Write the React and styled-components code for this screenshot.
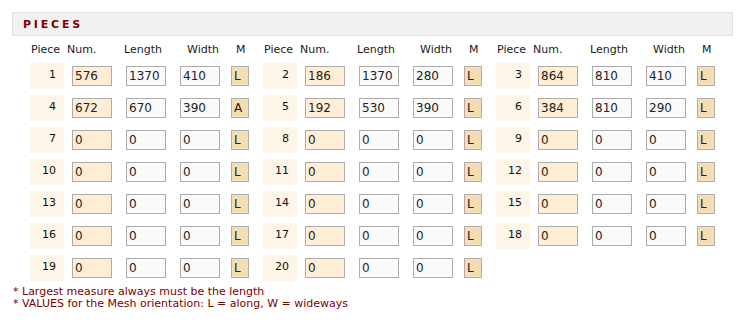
import React from "react";
import styled, { createGlobalStyle } from "styled-components";

const GlobalStyle = createGlobalStyle`
  body {
    margin: 0;
    background: #fff;
    font-family: Verdana, "DejaVu Sans", sans-serif;
  }
`;

const Page = styled.div`
  padding: 12px 13px 0 12px;
`;

const TitleBar = styled.div`
  height: 24px;
  box-sizing: border-box;
  border: 1px solid #e4e0e0;
  background: #f2f1f1;
  padding-left: 10px;
  display: flex;
  align-items: center;
`;

const Title = styled.h2`
  margin: 0;
  font-size: 11px;
  font-weight: bold;
  letter-spacing: 2.8px;
  color: #800000;
`;

const Grid = styled.div`
  display: grid;
  grid-template-columns: repeat(3, 48px 48px 54px 54px 29px);
  grid-auto-rows: 26px;
  grid-template-rows: 15px;
  row-gap: 6px;
  margin: 6px 0 0 4px;
`;

const Label = styled.div`
  font-size: 11px;
  line-height: 15px;
  color: #222;
  padding-left: ${(p) => p.$offset}px;
  white-space: nowrap;
`;

const PieceCell = styled.div`
  justify-self: end;
  width: 34px;
  height: 26px;
  box-sizing: border-box;
  background: #fdf5e7;
  font-size: 11px;
  line-height: 23px;
  text-align: right;
  padding-right: 8px;
  color: #111;
`;

const Field = styled.input`
  justify-self: end;
  align-self: center;
  width: ${(p) => (p.$small ? 18 : 40)}px;
  height: 20px;
  box-sizing: border-box;
  margin: 0;
  border: 1px solid #adadad;
  padding: 0 0 0 2px;
  font-family: Verdana, "DejaVu Sans", sans-serif;
  font-size: 12px;
  color: #222;
  background: ${(p) => p.$bg};
  outline: none;
`;

const Notes = styled.div`
  margin: 5px 0 0 1px;
  font-size: 11px;
  line-height: 12px;
  color: #800000;
`;

const pieces = [
  [576, 1370, 410, "L"],
  [186, 1370, 280, "L"],
  [864, 810, 410, "L"],
  [672, 670, 390, "A"],
  [192, 530, 390, "L"],
  [384, 810, 290, "L"],
];

const rows = [];
for (let i = 0; i < 20; i++) {
  rows.push(pieces[i] || [0, 0, 0, "L"]);
}

const headers = [
  ["Piece", 15],
  ["Num.", 3],
  ["Length", 12],
  ["Width", 21],
  ["M", 16],
];

const App = () => {
  return (
    <Page>
      <GlobalStyle />
      <TitleBar>
        <Title>PIECES</Title>
      </TitleBar>
      <Grid>
        {[0, 1, 2].map((g) =>
          headers.map(([text, offset]) => (
            <Label key={`${g}-${text}`} $offset={offset}>
              {text}
            </Label>
          ))
        )}
        {rows.map((p, i) => (
          <React.Fragment key={i}>
            <PieceCell>{i + 1}</PieceCell>
            <Field defaultValue={p[0]} $bg="#ffeed5" />
            <Field defaultValue={p[1]} $bg="#fafafa" />
            <Field defaultValue={p[2]} $bg="#fafafa" />
            <Field defaultValue={p[3]} $bg="#f5deb3" $small />
          </React.Fragment>
        ))}
      </Grid>
      <Notes>
        <div>* Largest measure always must be the length</div>
        <div>* VALUES for the Mesh orientation: L = along, W = wideways</div>
      </Notes>
    </Page>
  );
};

export default App;
